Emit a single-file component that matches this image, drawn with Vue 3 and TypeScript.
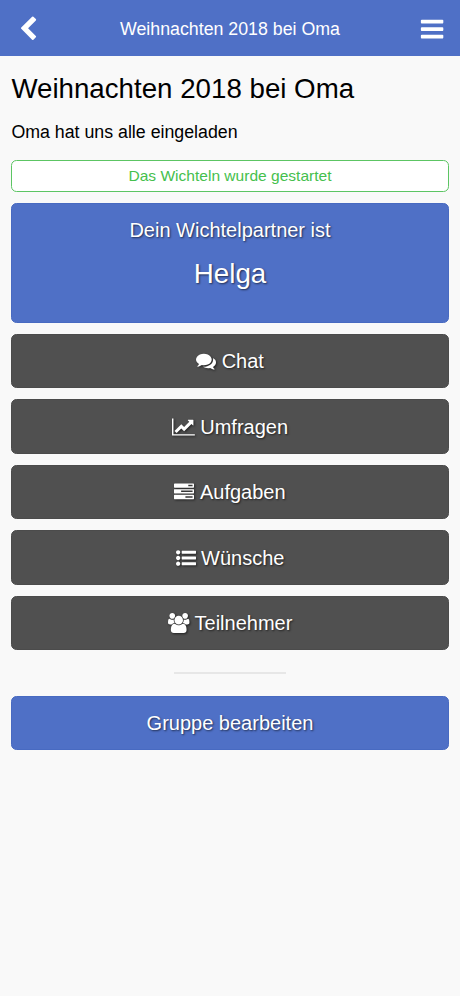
<script setup lang="ts">
interface Entry {
  label: string
  icon: string
  width: number
}

const chevron =
  'M1427 301l-531 531 531 531q19 19 19 45t-19 45l-166 166q-19 19-45 19t-45-19l-742-742q-19-19-19-45t19-45l742-742q19-19 45-19t45 19l166 166q19 19 19 45t-19 45z'

const bars =
  'M1664 1344v128q0 26-19 45t-45 19h-1408q-26 0-45-19t-19-45v-128q0-26 19-45t45-19h1408q26 0 45 19t19 45zm0-512v128q0 26-19 45t-45 19h-1408q-26 0-45-19t-19-45v-128q0-26 19-45t45-19h1408q26 0 45 19t19 45zm0-512v128q0 26-19 45t-45 19h-1408q-26 0-45-19t-19-45v-128q0-26 19-45t45-19h1408q26 0 45 19t19 45z'

const entries: Entry[] = [
  {
    label: 'Chat',
    width: 1792,
    icon: 'M1408 768q0 139-94 257t-256.5 186.5-353.5 68.5q-86 0-176-16-124 88-278 128-36 9-86 16h-3q-11 0-20.5-8t-11.5-21q-1-3-1-6.5t.5-6.5 2-6l2.5-5t3.5-5.5 4-5 4.5-5 4-4.5q5-6 23-25t26-29.5 22.5-29 25-38.5 20.5-44q-124-72-195-177t-71-224q0-139 94-257t256.5-186.5 353.5-68.5 353.5 68.5 256.5 186.5 94 257zm384 256q0 120-71 224.5t-195 176.5q10 24 20.5 44t25 38.5 22.5 29 26 29.5 23 25q1 1 4 4.5t4.5 5 4 5 3.5 5.5l2.5 5t2 6 .5 6.5-1 6.5q-3 14-13 22t-22 7q-50-7-86-16-154-40-278-128-90 16-176 16-271 0-472-132 58 4 88 4 161 0 309-45t264-129q125-92 192-212t67-254q0-77-23-152 129 71 204 178t75 230z',
  },
  {
    label: 'Umfragen',
    width: 2048,
    icon: 'M2048 1536v128h-2048v-1536h128v1408h1920zm-128-1248v435q0 21-19.5 29.5t-35.5-7.5l-121-121-633 633q-10 10-23 10t-23-10l-233-233-416 416-192-192 585-585q10-10 23-10t23 10l233 233 464-464-121-121q-16-16-7.5-35.5t29.5-19.5h435q14 0 23 9t9 23z',
  },
  {
    label: 'Aufgaben',
    width: 1792,
    icon: 'M1024 1408h640v-128h-640v128zm-384-512h1024v-128h-1024v128zm640-512h384v-128h-384v128zm512 832v256q0 26-19 45t-45 19h-1664q-26 0-45-19t-19-45v-256q0-26 19-45t45-19h1664q26 0 45 19t19 45zm0-512v256q0 26-19 45t-45 19h-1664q-26 0-45-19t-19-45v-256q0-26 19-45t45-19h1664q26 0 45 19t19 45zm0-512v256q0 26-19 45t-45 19h-1664q-26 0-45-19t-19-45v-256q0-26 19-45t45-19h1664q26 0 45 19t19 45z',
  },
  {
    label: 'Wünsche',
    width: 1792,
    icon: 'M384 1408q0 80-56 136t-136 56-136-56-56-136 56-136 136-56 136 56 56 136zm0-512q0 80-56 136t-136 56-136-56-56-136 56-136 136-56 136 56 56 136zm1408 416v192q0 13-9.5 22.5t-22.5 9.5h-1216q-13 0-22.5-9.5t-9.5-22.5v-192q0-13 9.5-22.5t22.5-9.5h1216q13 0 22.5 9.5t9.5 22.5zm-1408-928q0 80-56 136t-136 56-136-56-56-136 56-136 136-56 136 56 56 136zm1408 416v192q0 13-9.5 22.5t-22.5 9.5h-1216q-13 0-22.5-9.5t-9.5-22.5v-192q0-13 9.5-22.5t22.5-9.5h1216q13 0 22.5 9.5t9.5 22.5zm0-512v192q0 13-9.5 22.5t-22.5 9.5h-1216q-13 0-22.5-9.5t-9.5-22.5v-192q0-13 9.5-22.5t22.5-9.5h1216q13 0 22.5 9.5t9.5 22.5z',
  },
  {
    label: 'Teilnehmer',
    width: 1920,
    icon: 'M593 896q-162 5-265 128h-134q-82 0-138-40.5t-56-118.5q0-353 124-353 6 0 43.5 21t97.5 42.5 119 21.5q67 0 133-23-5 37-5 66 0 139 81 256zm1071 637q0 120-73 189.5t-194 69.5h-874q-121 0-194-69.5t-73-189.5q0-53 3.5-103.5t14-109 26.5-108.5 43-97.5 62-81 85.5-53.5 111.5-20q10 0 43 21.5t73 48 107 48 135 21.5 135-21.5 107-48 73-48 43-21.5q61 0 111.5 20t85.5 53.5 62 81 43 97.5 26.5 108.5 14 109 3.5 103.5zm-1024-1277q0 106-75 181t-181 75-181-75-75-181 75-181 181-75 181 75 75 181zm704 384q0 159-112.5 271.5t-271.5 112.5-271.5-112.5-112.5-271.5 112.5-271.5 271.5-112.5 271.5 112.5 112.5 271.5zm576 225q0 78-56 118.5t-138 40.5h-134q-103-123-265-128 81-117 81-256 0-29-5-66 66 23 133 23 59 0 119-21.5t97.5-42.5 43.5-21q124 0 124 353zm-128-609q0 106-75 181t-181 75-181-75-75-181 75-181 181-75 181 75 75 181z',
  },
]
</script>

<template>
  <div class="page">
    <header class="topbar">
      <button class="nav" type="button" aria-label="Zurück">
        <svg class="nav-icon" viewBox="0 0 1792 1792"><path :d="chevron" /></svg>
      </button>
      <div class="topbar-title">Weihnachten 2018 bei Oma</div>
      <button class="nav" type="button" aria-label="Menü">
        <svg class="nav-icon" viewBox="0 0 1792 1792"><path :d="bars" /></svg>
      </button>
    </header>
    <main class="content">
      <h1 class="title">Weihnachten 2018 bei Oma</h1>
      <p class="description">Oma hat uns alle eingeladen</p>
      <div class="notice">Das Wichteln wurde gestartet</div>
      <section class="partner">
        <div class="partner-label">Dein Wichtelpartner ist</div>
        <div class="partner-name">Helga</div>
      </section>
      <button v-for="entry in entries" :key="entry.label" class="button" type="button">
        <svg
          class="icon"
          :viewBox="`0 0 ${entry.width} 1792`"
          :style="{ width: `${(entry.width / 1792) * 20}px` }"
        >
          <path :d="entry.icon" />
        </svg>
        <span>{{ entry.label }}</span>
      </button>
      <hr class="divider" />
      <button class="button primary" type="button">Gruppe bearbeiten</button>
    </main>
  </div>
</template>

<style>
body {
  background: #f9f9f9;
}
</style>

<style scoped>
.page {
  min-height: 996px;
  background: #f9f9f9;
  color: #000;
  font-family: "Liberation Sans", Arial, sans-serif;
  font-size: 17.78px;
}
.topbar {
  display: flex;
  align-items: center;
  justify-content: space-between;
  height: 56px;
  background: #4f70c6;
  color: #fff;
}
.nav {
  display: flex;
  align-items: center;
  justify-content: center;
  box-sizing: border-box;
  width: 56px;
  height: 56px;
  padding: 2px 0 0;
  border: 0;
  background: none;
  color: inherit;
}
.nav-icon {
  width: 26.2px;
  height: 26.2px;
  fill: currentColor;
}
.topbar-title {
  padding-top: 2px;
  line-height: 54px;
}
.content {
  display: flex;
  flex-direction: column;
  gap: 11.1px;
  padding: 16px 11.4px 0;
}
.title {
  margin: 0;
  font-size: 27.7px;
  font-weight: 400;
  line-height: 33px;
}
.description {
  margin: 3px 0;
  line-height: 27px;
}
.notice {
  box-sizing: border-box;
  height: 31.4px;
  border: 1px solid #5cc563;
  border-radius: 5.5px;
  background: #fff;
  color: #45c04d;
  font-size: 15.56px;
  line-height: 30px;
  text-align: center;
}
.partner,
.button {
  box-sizing: border-box;
  border: 1px solid #4b4b4b;
  border-radius: 5.5px;
  background: #505050;
  color: #fff;
  font-size: 20px;
  text-shadow: 1px 1px 2px rgba(0, 0, 0, 0.6);
}
.partner {
  height: 119.9px;
  padding-top: 12px;
  border-color: #486ac1;
  background: #4f70c6;
  text-align: center;
}
.partner-label {
  line-height: 28px;
}
.partner-name {
  margin-top: 12px;
  font-size: 27.78px;
  line-height: 36px;
}
.button {
  display: flex;
  align-items: center;
  justify-content: center;
  gap: 5.5px;
  height: 54.45px;
  padding: 0.6px 0 0;
  font-family: inherit;
  line-height: 28px;
}
.primary {
  border-color: #486ac1;
  background: #4f70c6;
}
.icon {
  height: 20px;
  overflow: visible;
  fill: currentColor;
  filter: drop-shadow(1px 1px 1px rgba(0, 0, 0, 0.6));
}
.divider {
  width: 112px;
  height: 2px;
  margin: 10.7px auto;
  border: 0;
  background: #e7e7e7;
}
</style>
